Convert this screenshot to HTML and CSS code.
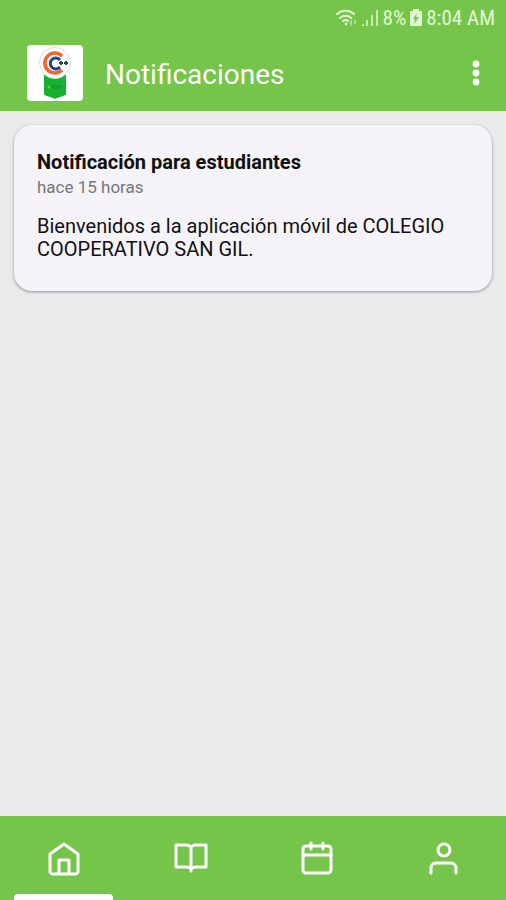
FILE: index.html
```html
<!DOCTYPE html>
<html lang="es">
<head>
    <meta charset="UTF-8">
    <meta name="viewport" content="width=device-width, initial-scale=1.0">
    <title>Notificaciones</title>
    <link rel="stylesheet" href="styles.css">
</head>
<body>

    <header class="top">
        <!-- Status bar -->
        <div class="status-bar">
            <svg class="status-icon" width="21" height="18" viewBox="0 0 21 18" fill="none" stroke="currentColor" stroke-width="2" stroke-linecap="round" aria-hidden="true">
                <path d="M1 5a13 13 0 0 1 17 0M4 9a8 8 0 0 1 11 0M7 12a4 4 0 0 1 5 0"/>
                <circle cx="10" cy="15" r="1.4" fill="currentColor" stroke="none"/>
                <path d="M15 12v4M19 12v2" opacity=".5"/>
            </svg>
            <svg class="status-icon" width="18" height="18" viewBox="0 0 18 18" fill="currentColor" aria-hidden="true">
                <path d="M0 17l3-3v3zM5 11h2v6H5zM10 6h2v11h-2zM15 1h2v16h-2z" opacity=".75"/>
            </svg>
            <span>8%</span>
            <svg class="status-icon" width="12" height="18" viewBox="0 0 12 18" aria-hidden="true">
                <path fill="currentColor" d="M3 2V0h6v2h2a1 1 0 0 1 1 1v13a1 1 0 0 1-1 1H1a1 1 0 0 1-1-1V3a1 1 0 0 1 1-1z"/>
                <path class="bolt" d="M7 4L3 10h2l-1 5 5-7H6z"/>
            </svg>
            <span>8:04 AM</span>
        </div>

        <!-- App bar -->
        <div class="app-bar">
            <svg class="logo" viewBox="0 0 56 56" role="img" aria-label="Colegio Cooperativo San Gil">
                <path fill="#16b033" d="M17 27h22v22c0 2-8 3-11 5-3-2-11-3-11-5z"/>
                <circle cx="28" cy="18" r="15.5" fill="#fff" stroke="#c9ecd0"/>
                <path fill="none" stroke="#f1672b" stroke-width="3.6" d="M35 11a10 10 0 1 0 0 14"/>
                <path fill="none" stroke="#20409c" stroke-width="3" d="M33 15a5.5 5.5 0 1 0 0 7"/>
                <path fill="none" stroke="#1c4a33" stroke-width="1.8" d="M32 18h4M34 16v4M37 18h4M39 16v4"/>
                <circle cx="22" cy="42" r="1.6" fill="#6fc522"/>
                <path stroke="#0f932a" d="M24 41h12M24 43h11"/>
            </svg>
            <h1 class="app-title">Notificaciones</h1>
            <button class="menu-button" type="button" aria-label="Más opciones">
                <svg width="8" height="26" viewBox="0 0 8 26" fill="currentColor" aria-hidden="true">
                    <circle cx="4" cy="4" r="3.4"/>
                    <circle cx="4" cy="13" r="3.4"/>
                    <circle cx="4" cy="22" r="3.4"/>
                </svg>
            </button>
        </div>
    </header>

    <main class="content">
        <article class="card">
            <h2 class="card-title">Notificación para estudiantes</h2>
            <p class="card-time">hace 15 horas</p>
            <p class="card-text">Bienvenidos a la aplicación móvil de COLEGIO COOPERATIVO SAN GIL.</p>
        </article>
    </main>

    <!-- Bottom tabs -->
    <nav class="tabs">
        <a class="tab active" href="#inicio" aria-label="Inicio" aria-current="page">
            <svg class="tab-icon" viewBox="0 0 36 36" aria-hidden="true">
                <path d="M5 14L19 4l14 10v17a3 3 0 0 1-3 3H8a3 3 0 0 1-3-3z"/>
                <path d="M14 33V20h10v13"/>
            </svg>
        </a>
        <a class="tab" href="#cursos" aria-label="Cursos">
            <svg class="tab-icon" viewBox="0 0 36 36" aria-hidden="true">
                <path d="M19 7c-1-1-3-2-5-2H4v22h10c2 0 4 1 5 2 1-1 3-2 5-2h10V5H24c-2 0-4 1-5 2zM19 7v24"/>
            </svg>
        </a>
        <a class="tab" href="#calendario" aria-label="Calendario">
            <svg class="tab-icon" viewBox="0 0 36 36" aria-hidden="true">
                <rect x="5" y="6" width="28" height="27" rx="3"/>
                <path d="M5 15h28M13 3v6M25 3v6"/>
            </svg>
        </a>
        <a class="tab" href="#perfil" aria-label="Perfil">
            <svg class="tab-icon" viewBox="0 0 36 36" aria-hidden="true">
                <circle cx="19" cy="10" r="6"/>
                <path d="M6 33v-5a5 5 0 0 1 5-5h15a5 5 0 0 1 5 5v5"/>
            </svg>
        </a>
    </nav>

</body>
</html>
```
FILE: styles.css
```css
* {
    box-sizing: border-box;
}

body {
    margin: 0;
    min-height: 100vh;
    display: flex;
    flex-direction: column;
    font-family: Roboto, "Liberation Sans", sans-serif;
    background-color: #eaeaea;
    color: #111;
}

/* --- Header --- */
.top {
    background-color: #74c549;
    color: #fff;
}

.status-bar {
    display: flex;
    justify-content: flex-end;
    align-items: center;
    gap: 4px;
    height: 36px;
    padding-right: 11px;
    font-family: "Roboto Condensed", Roboto, "Liberation Sans", sans-serif;
    font-size: 21px;
    color: #e2f8d4;
}

.bolt {
    fill: #74c549;
}

.app-bar {
    display: flex;
    align-items: center;
    height: 75px;
    padding: 0 16px 2px 27px;
}

.logo {
    width: 56px;
    height: 56px;
    border-radius: 4px;
    background-color: #fff;
}

.app-title {
    flex: 1;
    margin: 0;
    padding: 4px 0 0 22px;
    font-size: 28px;
    font-weight: 400;
}

.menu-button {
    display: flex;
    padding: 8px;
    margin: 0 2px 0 0;
    border: 0;
    background: none;
    color: #fff;
    cursor: pointer;
}

/* --- Notifications --- */
.content {
    flex: 1;
    padding: 14px;
}

.card {
    padding: 24px 23px 30px;
    border-radius: 18px;
    background-color: #f5f3f8;
    box-shadow: 0 1px 3px rgba(0, 0, 0, 0.4);
}

.card-title,
.card-time,
.card-text {
    margin: 0;
}

.card-title {
    font-size: 20px;
    line-height: 26px;
}

.card-time {
    font-size: 17px;
    line-height: 24px;
    color: #777;
}

.card-text {
    margin-top: 16px;
    font-size: 20px;
    line-height: 23px;
}

/* --- Bottom tabs --- */
.tabs {
    display: flex;
    height: 84px;
    background-color: #74c549;
}

.tab {
    position: relative;
    flex: 1;
    display: flex;
    justify-content: center;
    align-items: center;
    color: #fff;
}

.tab-icon {
    width: 36px;
    height: 36px;
    fill: none;
    stroke: currentColor;
    stroke-width: 3;
    stroke-linecap: round;
    stroke-linejoin: round;
}

.active::after {
    content: "";
    position: absolute;
    left: 14px;
    right: 14px;
    bottom: 0;
    height: 6px;
    border-radius: 4px 4px 0 0;
    background-color: #fff;
}
```
